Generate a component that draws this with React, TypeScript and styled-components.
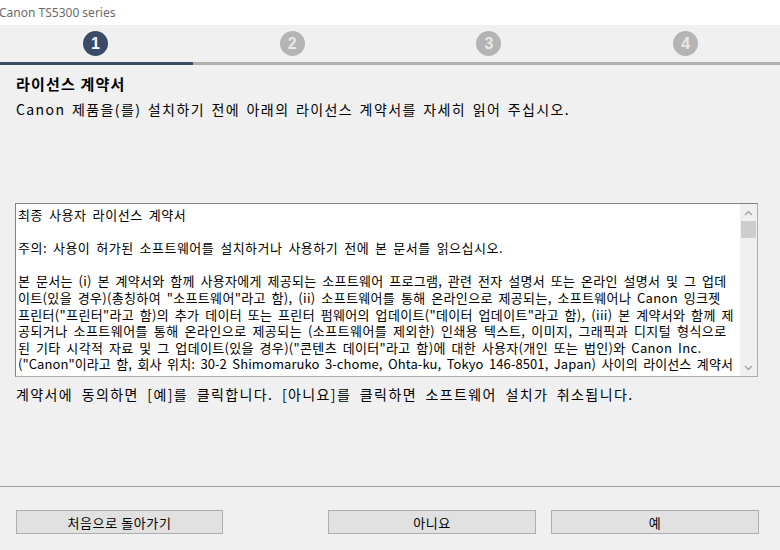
import React from 'react';
import styled, { createGlobalStyle } from 'styled-components';

const GlobalStyle = createGlobalStyle`
  html, body {
    margin: 0;
    padding: 0;
    background: #f0f0f0;
  }
  body {
    font-family: 'Noto Sans CJK KR', 'Noto Sans', sans-serif;
    color: #000;
  }
`;

const Window = styled.div`
  width: 780px;
  height: 550px;
  display: flex;
  flex-direction: column;
  background: #f0f0f0;
  overflow: hidden;
`;

const TitleBar = styled.div`
  height: 25px;
  background: #fff;
  display: flex;
  align-items: center;
  font-family: 'Noto Sans', 'Liberation Sans', sans-serif;
  font-size: 12px;
  color: #6b6b6b;
  margin-left: -1px;
`;

const Steps = styled.div`
  height: 37px;
  width: 787px;
  margin-left: -3px;
  display: grid;
  grid-template-columns: repeat(4, 1fr);
  align-items: center;
  justify-items: center;
`;

const StepDot = styled.div<{ $active?: boolean }>`
  width: 25px;
  height: 25px;
  border-radius: 50%;
  background: ${(p) => (p.$active ? '#3b4a66' : '#b4b4b4')};
  color: ${(p) => (p.$active ? '#fff' : '#e8e8e8')};
  display: flex;
  align-items: center;
  justify-content: center;
  font-family: 'Liberation Sans', Arial, sans-serif;
  font-weight: bold;
  font-size: 16px;
`;

const Track = styled.div`
  height: 3px;
  display: flex;
`;

const TrackPart = styled.div<{ $done?: boolean }>`
  height: 100%;
  background: ${(p) => (p.$done ? '#3b4a66' : '#b0b0b0')};
  ${(p) => (p.$done ? 'width: 193px;' : 'flex: 1;')}
`;

const Content = styled.div`
  padding: 0 16px;
  display: flex;
  flex-direction: column;
`;

const Heading = styled.h1`
  margin: 8px 0 0;
  font-size: 15px;
  font-weight: bold;
  line-height: 22px;
  letter-spacing: 1.2px;
`;

const Lead = styled.p`
  margin: 3px 0 0;
  font-size: 14px;
  line-height: 22px;
  letter-spacing: 1.4px;
  word-spacing: 2px;
`;

const LicenseBox = styled.div`
  margin-top: 83px;
  margin-left: -1px;
  width: 743px;
  height: 174px;
  box-sizing: border-box;
  background: #fff;
  border: 1px solid #adadad;
  border-top-color: #828282;
  border-left-color: #828282;
  display: flex;
`;

const LicenseText = styled.div`
  flex: 1;
  padding: 3px 0 0 2px;
  font-size: 13px;
  line-height: 16.6px;
  word-spacing: 2.5px;
  overflow: hidden;
`;

const Line = styled.div<{ $track: number }>`
  white-space: nowrap;
  height: 16.6px;
  letter-spacing: ${(p) => p.$track}px;
`;

const Scroll = styled.div`
  width: 17px;
  background: #f0f0f0;
  display: flex;
  flex-direction: column;
  align-items: center;
`;

const Arrow = styled.div`
  height: 17px;
  width: 17px;
  display: flex;
  align-items: center;
  justify-content: center;
`;

const Thumb = styled.div`
  width: 15px;
  height: 17px;
  background: #cdcdcd;
`;

const ScrollGap = styled.div`
  flex: 1;
`;

const Agree = styled.p`
  margin: 8px 0 0;
  font-size: 14px;
  line-height: 18px;
  letter-spacing: 1.4px;
  word-spacing: 4px;
`;

const Footer = styled.div`
  margin-top: auto;
  height: 64px;
  border-top: 1px solid #a0a0a0;
  display: flex;
  align-items: flex-start;
  padding: 23px 0 0 16px;
  box-sizing: border-box;
`;

const Button = styled.button<{ $w: number; $ml?: number }>`
  width: ${(p) => p.$w}px;
  margin-left: ${(p) => p.$ml || 0}px;
  height: 24px;
  box-sizing: border-box;
  background: #e1e1e1;
  border: 1px solid #adadad;
  font-family: 'Noto Sans CJK KR', sans-serif;
  font-size: 13px;
  letter-spacing: 0.6px;
  color: #000;
  padding: 0;
`;

const Chevron = ({ up }: { up?: boolean }) => (
  <svg width="9" height="6" viewBox="0 0 9 6">
    <path
      d={up ? 'M1 5 L4.5 1.5 L8 5' : 'M1 1 L4.5 4.5 L8 1'}
      fill="none"
      stroke="#a3a3a3"
      strokeWidth="1.4"
    />
  </svg>
);

const lines: [string, number][] = [
  ['최종 사용자 라이선스 계약서', 0.57],
  ['', 0],
  ['주의: 사용이 허가된 소프트웨어를 설치하거나 사용하기 전에 본 문서를 읽으십시오.', 0.5],
  ['', 0],
  ['본 문서는 (i) 본 계약서와 함께 사용자에게 제공되는 소프트웨어 프로그램, 관련 전자 설명서 또는 온라인 설명서 및 그 업데', 0.3],
  ['이트(있을 경우)(총칭하여 "소프트웨어"라고 함), (ii) 소프트웨어를 통해 온라인으로 제공되는, 소프트웨어나 Canon 잉크젯', 0.34],
  ['프린터("프린터"라고 함)의 추가 데이터 또는 프린터 펌웨어의 업데이트("데이터 업데이트"라고 함), (iii) 본 계약서와 함께 제', 0.33],
  ['공되거나 소프트웨어를 통해 온라인으로 제공되는 (소프트웨어를 제외한) 인쇄용 텍스트, 이미지, 그래픽과 디지털 형식으로', 0.45],
  ['된 기타 시각적 자료 및 그 업데이트(있을 경우)("콘텐츠 데이터"라고 함)에 대한 사용자(개인 또는 법인)와 Canon Inc.', 0.33],
  ['("Canon"이라고 함, 회사 위치: 30-2 Shimomaruko 3-chome, Ohta-ku, Tokyo 146-8501, Japan) 사이의 라이선스 계약서', 0.08],
];

export default function App() {
  return (
    <Window>
      <GlobalStyle />
      <TitleBar>Canon TS5300 series</TitleBar>
      <Steps>
        {[1, 2, 3, 4].map((n) => (
          <StepDot key={n} $active={n === 1}>
            {n}
          </StepDot>
        ))}
      </Steps>
      <Track>
        <TrackPart $done />
        <TrackPart />
      </Track>
      <Content>
        <Heading>라이선스 계약서</Heading>
        <Lead>Canon 제품을(를) 설치하기 전에 아래의 라이선스 계약서를 자세히 읽어 주십시오.</Lead>
        <LicenseBox>
          <LicenseText>
            {lines.map(([text, track], i) => (
              <Line key={i} $track={track}>
                {text}
              </Line>
            ))}
          </LicenseText>
          <Scroll>
            <Arrow>
              <Chevron up />
            </Arrow>
            <Thumb />
            <ScrollGap />
            <Arrow>
              <Chevron />
            </Arrow>
          </Scroll>
        </LicenseBox>
        <Agree>계약서에 동의하면 [예]를 클릭합니다. [아니요]를 클릭하면 소프트웨어 설치가 취소됩니다.</Agree>
      </Content>
      <Footer>
        <Button $w={207}>처음으로 돌아가기</Button>
        <Button $w={208} $ml={105}>
          아니요
        </Button>
        <Button $w={208} $ml={15}>
          예
        </Button>
      </Footer>
    </Window>
  );
}
